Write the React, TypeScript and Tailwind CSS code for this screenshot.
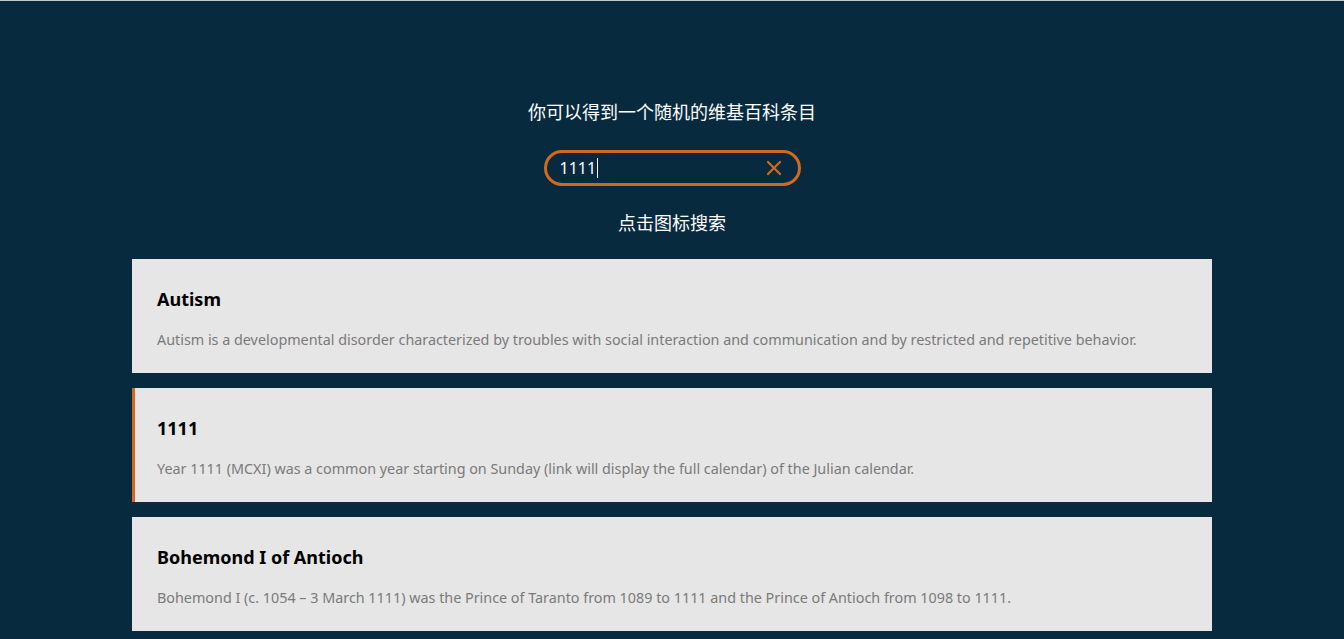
import React from 'react';

const results = [
  {
    title: 'Autism',
    extract:
      'Autism is a developmental disorder characterized by troubles with social interaction and communication and by restricted and repetitive behavior.',
    active: false,
  },
  {
    title: '1111',
    extract:
      'Year 1111 (MCXI) was a common year starting on Sunday (link will display the full calendar) of the Julian calendar.',
    active: true,
  },
  {
    title: 'Bohemond I of Antioch',
    extract:
      'Bohemond I (c. 1054 – 3 March 1111) was the Prince of Taranto from 1089 to 1111 and the Prince of Antioch from 1098 to 1111.',
    active: false,
  },
];

function App() {
  return (
    <div
      className="min-h-screen bg-[#082a3f] border-t border-[#c8c8c8]"
      style={{ fontFamily: '"Noto Sans", "Noto Sans CJK SC", sans-serif' }}
    >
      <div className="flex flex-col items-center pt-[98px]">
        <p className="text-white text-[18px] leading-[26px]">你可以得到一个随机的维基百科条目</p>

        <div className="mt-[25px] w-[257px] h-[36px] rounded-full border-[3px] border-[#d2691e] flex items-center pl-[13px] pr-[16px]">
          <div className="flex-1 flex items-center text-white text-[16px]">
            <span>1111</span>
            <span className="ml-[1px] w-px h-[20px] bg-white" />
          </div>
          <svg width="16" height="16" viewBox="0 0 16 16" className="text-[#d2691e]">
            <path d="M2 2 L14 14 M14 2 L2 14" stroke="currentColor" strokeWidth="2.2" strokeLinecap="round" />
          </svg>
        </div>

        <p className="mt-[24px] text-white text-[18px] leading-[26px]">点击图标搜索</p>

        <div className="mt-[23px] w-[1080px] flex flex-col gap-[15px]">
          {results.map((r) => (
            <div
              key={r.title}
              className={`h-[114px] bg-[#e6e6e6] pr-6 pt-[28px] ${
                r.active ? 'border-l-[3px] border-[#d2691e] pl-[22px]' : 'pl-[25px]'
              }`}
            >
              <h3 className="text-black font-bold text-[18px] leading-[24px]">{r.title}</h3>
              <p className="mt-[18px] text-[#7a7a7a] text-[14.35px] leading-[22px]">{r.extract}</p>
            </div>
          ))}
        </div>
      </div>
    </div>
  );
}

export default App;
